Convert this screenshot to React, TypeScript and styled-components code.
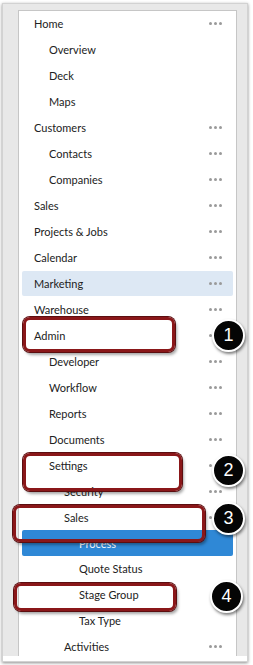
import styled, { createGlobalStyle } from "styled-components";

const GlobalStyle = createGlobalStyle`
  html, body {
    margin: 0;
    padding: 0;
    background: #ffffff;
  }
`;

const Page = styled.div`
  position: relative;
  width: 253px;
  height: 665px;
  overflow: hidden;
  font-family: "Lato", "Liberation Sans", sans-serif;
`;

const Frame = styled.div`
  position: absolute;
  left: 2px;
  top: 3px;
  width: 244px;
  background: #ffffff;
  border: 1px solid #d2d2d2;
  padding-bottom: 5px;
  box-shadow: 0 1px 3px rgba(0, 0, 0, 0.45);
`;

const Gutter = styled.div`
  height: 646px;
  overflow: hidden;
  background: #e8e8e8;
  padding: 6px 10px 0 15px;
`;

const Panel = styled.div`
  height: 100%;
  background: #ffffff;
  border: 1px solid #c6c6c6;
  border-bottom: none;
`;

type Tone = "plain" | "hover" | "active";

const Row = styled.div<{ $level: number; $tone: Tone }>`
  display: flex;
  align-items: center;
  justify-content: space-between;
  height: 25.96px;
  margin: 0 3px;
  padding: 0 11px 0 ${(p) => 12 + p.$level * 15}px;
  border-radius: 2px;
  font-size: 11px;
  color: ${(p) => (p.$tone === "active" ? "#ffffff" : "#222222")};
  background: ${(p) =>
    p.$tone === "active" ? "#2f88d6" : p.$tone === "hover" ? "#dde8f4" : "transparent"};
`;

const Dots = styled.span`
  display: flex;
  gap: 2px;

  & > i {
    width: 3px;
    height: 3px;
    border-radius: 50%;
    background: #9a9a9a;
  }
`;

const Callout = styled.div<{ $x: number; $y: number; $w: number; $h: number }>`
  position: absolute;
  left: ${(p) => p.$x}px;
  top: ${(p) => p.$y}px;
  width: ${(p) => p.$w}px;
  height: ${(p) => p.$h}px;
  box-sizing: border-box;
  border: 3px solid #8a1719;
  border-radius: 7px;
  box-shadow: 0 0 0 1px #5c0e10, 2px 3px 3px rgba(0, 0, 0, 0.35);
`;

const Badge = styled.div<{ $x: number; $y: number }>`
  position: absolute;
  left: ${(p) => p.$x}px;
  top: ${(p) => p.$y}px;
  width: 29px;
  height: 29px;
  border-radius: 50%;
  border: 2px solid #ffffff;
  background: #050505;
  color: #ffffff;
  display: flex;
  align-items: center;
  justify-content: center;
  font-family: "Liberation Sans", Arial, sans-serif;
  font-size: 18px;
  box-shadow: 1px 2px 3px rgba(0, 0, 0, 0.5);
`;

type Item = { label: string; level: number; dots?: boolean; tone?: Tone };

const items: Item[] = [
  { label: "Home", level: 0, dots: true },
  { label: "Overview", level: 1 },
  { label: "Deck", level: 1 },
  { label: "Maps", level: 1 },
  { label: "Customers", level: 0, dots: true },
  { label: "Contacts", level: 1, dots: true },
  { label: "Companies", level: 1, dots: true },
  { label: "Sales", level: 0, dots: true },
  { label: "Projects & Jobs", level: 0, dots: true },
  { label: "Calendar", level: 0, dots: true },
  { label: "Marketing", level: 0, dots: true, tone: "hover" },
  { label: "Warehouse", level: 0, dots: true },
  { label: "Admin", level: 0, dots: true },
  { label: "Developer", level: 1, dots: true },
  { label: "Workflow", level: 1, dots: true },
  { label: "Reports", level: 1, dots: true },
  { label: "Documents", level: 1, dots: true },
  { label: "Settings", level: 1, dots: true },
  { label: "Security", level: 2, dots: true },
  { label: "Sales", level: 2, dots: true },
  { label: "Process", level: 3, tone: "active" },
  { label: "Quote Status", level: 3 },
  { label: "Stage Group", level: 3 },
  { label: "Tax Type", level: 3 },
  { label: "Activities", level: 2, dots: true },
];

const callouts = [
  { x: 23, y: 317, w: 152, h: 35 },
  { x: 23, y: 453, w: 159, h: 38 },
  { x: 13, y: 505, w: 192, h: 37 },
  { x: 14, y: 583, w: 162, h: 28 },
];

const badges = [
  { n: 1, x: 212, y: 319 },
  { n: 2, x: 212, y: 454 },
  { n: 3, x: 212, y: 502 },
  { n: 4, x: 210, y: 580 },
];

const App = () => {
  return (
    <Page>
      <GlobalStyle />
      <Frame>
        <Gutter>
          <Panel>
            {items.map((item, i) => (
              <Row key={i} $level={item.level} $tone={item.tone ?? "plain"}>
                <span>{item.label}</span>
                {item.dots && (
                  <Dots>
                    <i />
                    <i />
                    <i />
                  </Dots>
                )}
              </Row>
            ))}
          </Panel>
        </Gutter>
      </Frame>
      {callouts.map((c, i) => (
        <Callout key={i} $x={c.x} $y={c.y} $w={c.w} $h={c.h} />
      ))}
      {badges.map((b) => (
        <Badge key={b.n} $x={b.x} $y={b.y}>
          {b.n}
        </Badge>
      ))}
    </Page>
  );
};

export default App;
